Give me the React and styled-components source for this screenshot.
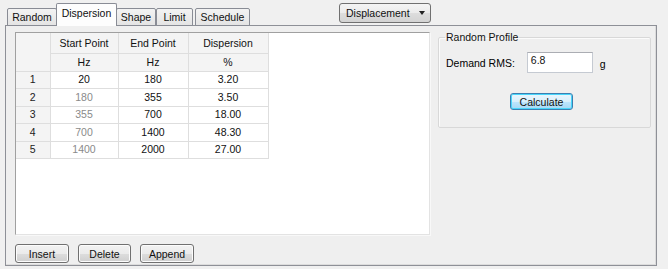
import styled, { createGlobalStyle } from 'styled-components'

const GlobalStyle = createGlobalStyle`
    html, body {
        margin: 0;
        padding: 0;
        background: #f0f0f0;
    }
    body {
        font-family: "Liberation Sans", Arial, sans-serif;
        font-size: 10.5px;
        color: #000;
    }
`

const Window = styled.div`
    width: 668px;
    height: 269px;
    box-sizing: border-box;
    padding: 3px 11px 4px 5px;
    display: flex;
    flex-direction: column;
    overflow: hidden;
`

const TopBar = styled.div`
    display: flex;
    align-items: flex-start;
    height: 22px;
    position: relative;
    z-index: 1;
`

const TabStrip = styled.div`
    display: flex;
    align-items: flex-end;
    height: 23px;
    margin-left: 2px;
`

const Tab = styled.div`
    box-sizing: border-box;
    height: ${p => (p.$active ? '23px' : '18px')};
    width: ${p => p.$w}px;
    margin-right: ${p => p.$gap || 0}px;
    padding-top: ${p => (p.$active ? '3px' : '2px')};
    text-align: center;
    border: 1px solid #898c95;
    border-bottom: ${p => (p.$active ? 'none' : '1px solid #898c95')};
    border-radius: 2px 2px 0 0;
    background: ${p => (p.$active ? '#fdfdfd' : 'linear-gradient(#f3f3f3, #e4e4e4)')};
    margin-left: ${p => (p.$active ? '-1px' : '0')};
    ${p => p.$active && 'margin-right: -1px;'}
    color: #111;
    white-space: nowrap;
`

const Combo = styled.div`
    box-sizing: border-box;
    margin-left: 89px;
    width: 92px;
    height: 20px;
    border: 1px solid #707070;
    border-radius: 3px;
    background: linear-gradient(#f4f4f4 0%, #ebebeb 50%, #dddddd 51%, #d3d3d3 100%);
    display: flex;
    align-items: center;
    justify-content: space-between;
    padding: 0 5px 0 6px;
    color: #111;
`

const Arrow = styled.span`
    width: 0;
    height: 0;
    border-left: 3.5px solid transparent;
    border-right: 3.5px solid transparent;
    border-top: 4px solid #222;
`

const Panel = styled.div`
    flex: 1;
    box-sizing: border-box;
    border: 1px solid #8e9097;
    box-shadow: inset -1px -1px 0 #dcdcdc;
    background: #efefef;
    padding: 6px 5px 2px 9px;
    display: grid;
    grid-template-columns: 415px 1fr;
    column-gap: 8px;
`

const LeftCol = styled.div`
    display: flex;
    flex-direction: column;
`

const GridBox = styled.div`
    box-sizing: border-box;
    height: 203px;
    background: #fff;
    border-top: 1px solid #a0a0a0;
    border-left: 1px solid #a0a0a0;
    border-right: 1px solid #e3e3e3;
    border-bottom: 1px solid #e3e3e3;
    box-shadow: 1px 1px 0 #f8f8f8;
`

const Table = styled.table`
    border-collapse: collapse;
    table-layout: fixed;
    font-size: 10.5px;
    td, th {
        border: 1px solid #dedede;
        padding: 0;
        text-align: center;
        font-weight: normal;
        height: 16.5px;
        line-height: 13px;
    }
    tr:first-child td, tr:first-child th { border-top: none; }
    tr > *:first-child { border-left: none; }
`

const HeadCell = styled.th`
    background: #f4f4f4;
    color: #111;
    height: ${p => p.$h || 16.5}px !important;
`

const RowHead = styled.th`
    background: #f4f4f4;
    color: #222;
`

const Cell = styled.td`
    color: ${p => (p.$dim ? '#8a8a8a' : '#111')};
    background: #fff;
`

const ButtonRow = styled.div`
    display: flex;
    gap: 9px;
    margin-top: 9px;
`

const Button = styled.button`
    box-sizing: border-box;
    width: ${p => p.$w || 54}px;
    height: ${p => p.$h || 19}px;
    border: 1px solid ${p => (p.$focus ? '#3c7fb1' : '#707070')};
    border-radius: 3px;
    background: ${p => (p.$focus
        ? 'linear-gradient(#eaf6fd 0%, #d9f0fc 50%, #bee6fd 51%, #a7d9f5 100%)'
        : 'linear-gradient(#f2f2f2 0%, #ebebeb 50%, #dddddd 51%, #cfcfcf 100%)')};
    box-shadow: inset 0 0 0 1px ${p => (p.$focus ? '#48d6fb' : '#fcfcfc')};
    font-family: "Liberation Sans", Arial, sans-serif;
    font-size: 10.5px;
    color: #111;
    padding: 0;
    margin: 0;
`

const Group = styled.fieldset`
    box-sizing: border-box;
    margin: -1px 0 0;
    height: 97px;
    border: 1px solid #d8d8d8;
    box-shadow: inset 1px 1px 0 #fbfbfb;
    border-radius: 2px;
    padding: 5px 8px 0 7px;
    display: flex;
    flex-direction: column;
    legend {
        padding: 0 1px;
        margin-left: -1px;
        color: #111;
    }
`

const Field = styled.div`
    display: flex;
    align-items: center;
    gap: 12px;
    margin-top: 4px;
`

const Input = styled.div`
    box-sizing: border-box;
    width: 66px;
    height: 21px;
    background: #fff;
    border: 1px solid #c5cad2;
    border-top-color: #abadb3;
    padding: 1px 3px;
    color: #111;
`

const Unit = styled.span`
    margin-left: -5px;
    margin-top: 3px;
`

const CenterRow = styled.div`
    display: flex;
    padding-left: 64px;
    margin-top: 20px;
`

const rows = [
    ['1', '20', '180', '3.20', false],
    ['2', '180', '355', '3.50', true],
    ['3', '355', '700', '18.00', true],
    ['4', '700', '1400', '48.30', true],
    ['5', '1400', '2000', '27.00', true],
]

const App = () => (
    <>
        <GlobalStyle />
        <Window>
            <TopBar>
                <TabStrip>
                    <Tab $w={50}>Random</Tab>
                    <Tab $active $w={61}>Dispersion</Tab>
                    <Tab $w={40}>Shape</Tab>
                    <Tab $w={37} $gap={2}>Limit</Tab>
                    <Tab $w={55}>Schedule</Tab>
                </TabStrip>
                <Combo>
                    <span>Displacement</span>
                    <Arrow />
                </Combo>
            </TopBar>
            <Panel>
                <LeftCol>
                    <GridBox>
                        <Table>
                            <colgroup>
                                <col style={{ width: 34 }} />
                                <col style={{ width: 68 }} />
                                <col style={{ width: 70 }} />
                                <col style={{ width: 80 }} />
                            </colgroup>
                            <thead>
                                <tr>
                                    <HeadCell rowSpan={2}></HeadCell>
                                    <HeadCell $h={20}>Start Point</HeadCell>
                                    <HeadCell $h={20}>End Point</HeadCell>
                                    <HeadCell $h={20}>Dispersion</HeadCell>
                                </tr>
                                <tr>
                                    <HeadCell>Hz</HeadCell>
                                    <HeadCell>Hz</HeadCell>
                                    <HeadCell>%</HeadCell>
                                </tr>
                            </thead>
                            <tbody>
                                {rows.map(([n, a, b, c, dim]) => (
                                    <tr key={n}>
                                        <RowHead>{n}</RowHead>
                                        <Cell $dim={dim}>{a}</Cell>
                                        <Cell>{b}</Cell>
                                        <Cell>{c}</Cell>
                                    </tr>
                                ))}
                            </tbody>
                        </Table>
                    </GridBox>
                    <ButtonRow>
                        <Button>Insert</Button>
                        <Button $w={53}>Delete</Button>
                        <Button>Append</Button>
                    </ButtonRow>
                </LeftCol>
                <div>
                    <Group>
                        <legend>Random Profile</legend>
                        <Field>
                            <span>Demand RMS:</span>
                            <Input>6.8</Input>
                            <Unit>g</Unit>
                        </Field>
                        <CenterRow>
                            <Button $focus $w={63} $h={17}>Calculate</Button>
                        </CenterRow>
                    </Group>
                </div>
            </Panel>
        </Window>
    </>
)

export default App
